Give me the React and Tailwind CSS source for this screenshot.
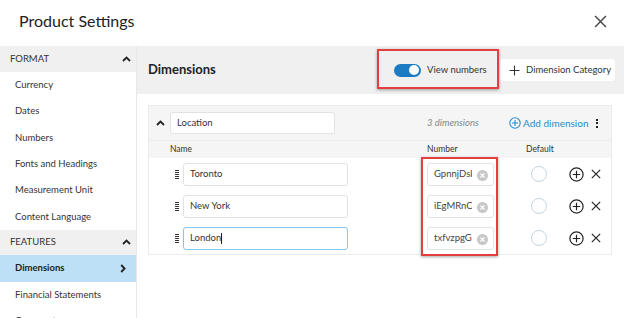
import React from "react";

const ChevUp = ({ className = "" }) => (
  <svg width="9" height="6" viewBox="0 0 9 6" className={className}>
    <path d="M1 5 L4.5 1.5 L8 5" fill="none" stroke="#222" strokeWidth="1.8" />
  </svg>
);

const ChevRight = () => (
  <svg width="6" height="9" viewBox="0 0 6 9">
    <path d="M1.2 1 L4.6 4.5 L1.2 8" fill="none" stroke="#222" strokeWidth="1.8" />
  </svg>
);

const XIcon = ({ size = 12, w = 1.4, color = "#333" }) => (
  <svg width={size} height={size} viewBox="0 0 12 12">
    <path d="M1 1 L11 11 M11 1 L1 11" stroke={color} strokeWidth={w} fill="none" />
  </svg>
);

const Handle = () => (
  <div className="flex flex-col gap-[1px] w-[4px]">
    {[0, 1, 2, 3, 4].map((i) => (
      <div key={i} className="h-[1px] w-[4px] bg-[#333]" />
    ))}
  </div>
);

const Clear = () => (
  <div className="w-[11px] h-[11px] rounded-full bg-[#c8c8c8] flex items-center justify-center mt-[3px]">
    <svg width="5" height="5" viewBox="0 0 5 5">
      <path d="M0.5 0.5 L4.5 4.5 M4.5 0.5 L0.5 4.5" stroke="#fff" strokeWidth="1.2" />
    </svg>
  </div>
);

const PlusCircle = () => (
  <svg width="15" height="15" viewBox="0 0 15 15">
    <circle cx="7.5" cy="7.5" r="6.6" fill="none" stroke="#222" strokeWidth="1.2" />
    <path d="M7.5 3.8 V11.2 M3.8 7.5 H11.2" stroke="#222" strokeWidth="1.2" />
  </svg>
);

const rows = [
  { name: "Toronto", num: "GpnnjDsk", focus: false },
  { name: "New York", num: "iEgMRnCq", focus: false },
  { name: "London", num: "txfvzpgG", focus: true },
];

const sideItems = ["Currency", "Dates", "Numbers", "Fonts and Headings", "Measurement Unit", "Content Language"];

export default function App() {
  return (
    <div
      className="relative w-[624px] h-[318px] overflow-hidden bg-white text-[#333]"
      style={{ fontFamily: "Lato, 'Open Sans', sans-serif" }}
    >
      <div className="h-[46px] flex items-center justify-between pl-[19px] pr-[17px]">
        <div className="text-[16px] text-[#222] leading-none mt-[-4px]">Product Settings</div>
        <div className="mt-[-3px]">
          <XIcon size={13} w={1.3} color="#444" />
        </div>
      </div>
      <div className="flex h-[272px]">
        <div className="w-[137px] shrink-0 border-r border-[#e8e8e8]">
          <div className="h-[26px] bg-[#f0f0f0] flex items-center justify-between pl-[10px] pr-[5px] text-[9.5px] text-[#333]">
            <span>FORMAT</span>
            <ChevUp />
          </div>
          {sideItems.map((s) => (
            <div key={s} className="h-[26.3px] flex items-center pl-[15px] text-[9.5px] text-[#333]">
              {s}
            </div>
          ))}
          <div className="h-[25px] bg-[#f0f0f0] flex items-center justify-between pl-[10px] pr-[5px] text-[9.5px] text-[#333]">
            <span>FEATURES</span>
            <ChevUp />
          </div>
          <div className="h-[27px] bg-[#bde0f6] flex items-center justify-between pl-[15px] pr-[10px] text-[9.5px] font-bold text-[#222]">
            <span>Dimensions</span>
            <ChevRight />
          </div>
          <div className="h-[26px] flex items-center pl-[15px] text-[9.5px] text-[#333]">Financial Statements</div>
          <div className="h-[26px] flex items-center pl-[15px] text-[9.5px] text-[#333]">Comments</div>
        </div>
        <div className="flex-1">
          <div className="h-[48px] bg-[#f0f0f0] flex items-center pl-[11px] pr-[9px]">
            <div className="text-[13px] font-bold text-[#222]">Dimensions</div>
            <div className="ml-auto flex items-center pl-[17px] w-[122px] h-[39px] mr-[1px]">
              <div className="w-[27px] h-[13px] rounded-full bg-[#1b7bc3] relative">
                <div className="absolute right-[2px] top-[1.5px] w-[10px] h-[10px] rounded-full bg-white" />
              </div>
              <span className="ml-[6px] text-[9.5px] text-[#333] whitespace-nowrap">View numbers</span>
            </div>
            <div className="h-[22px] w-[115px] bg-white rounded-[3px] flex items-center pl-[9px] text-[9.5px] text-[#333] whitespace-nowrap">
              <svg width="11" height="11" viewBox="0 0 11 11">
                <path d="M5.5 0.5 V10.5 M0.5 5.5 H10.5" stroke="#333" strokeWidth="1.1" />
              </svg>
              <span className="ml-[6px]">Dimension Category</span>
            </div>
          </div>
          <div className="mt-[11px] ml-[11px] w-[464px] border border-[#ececec]">
            <div className="h-[34px] bg-[#f5f5f5] flex items-center">
              <div className="w-[21px] flex justify-center pl-[1px]">
                <ChevUp />
              </div>
              <div className="w-[165px] h-[22px] bg-white border border-[#e2e2e2] rounded-[3px] flex items-center pl-[6px] text-[9.5px] text-[#333]">
                Location
              </div>
              <div className="ml-[92px] w-[82px] text-[9.5px] italic text-[#888] whitespace-nowrap">3 dimensions</div>
              <div className="w-[87px] flex items-center text-[10px] text-[#2a8ad0] whitespace-nowrap">
                <svg width="12" height="12" viewBox="0 0 12 12">
                  <circle cx="6" cy="6" r="5.2" fill="none" stroke="#2a8ad0" strokeWidth="1.1" />
                  <path d="M6 3 V9 M3 6 H9" stroke="#2a8ad0" strokeWidth="1.1" />
                </svg>
                <span className="ml-[2px]">Add dimension</span>
              </div>
              <div className="flex flex-col gap-[1.5px]">
                <div className="w-[2px] h-[2px] bg-[#222]" />
                <div className="w-[2px] h-[2px] bg-[#222]" />
                <div className="w-[2px] h-[2px] bg-[#222]" />
              </div>
            </div>
            <div className="h-[18px] bg-[#f5f5f5] flex items-center text-[8.5px] text-[#333] border-t border-[#ececec]">
              <div className="w-[278px] pl-[21px]">Name</div>
              <div className="w-[99px]">Number</div>
              <div>Default</div>
            </div>
            <div>
              {rows.map((r) => (
                <div key={r.name} className="h-[32px] flex items-center">
                  <div className="w-[34px] flex justify-end pr-[4px]">
                    <Handle />
                  </div>
                  <div
                    className={
                      "w-[165px] h-[23px] bg-white rounded-[3px] flex items-center pl-[6px] text-[9.5px] text-[#333] border " +
                      (r.focus ? "border-[#86c5ec]" : "border-[#e2e2e2]")
                    }
                  >
                    {r.name}
                    {r.focus && <span className="w-[1px] h-[11px] bg-[#222]" />}
                  </div>
                  <div className="w-[79px]" />
                  <div className="w-[67px] h-[23px] bg-white border border-[#e2e2e2] rounded-[3px] flex items-center pl-[6px] text-[9.5px] text-[#444]">
                    <span className="w-[38px] overflow-hidden whitespace-nowrap">{r.num}</span>
                    <span className="ml-[5px]">
                      <Clear />
                    </span>
                  </div>
                  <div className="ml-[37px] w-[16px] h-[16px] rounded-full border border-[#c7d3dc] bg-white" />
                  <div className="ml-[22px] flex items-center">
                    <PlusCircle />
                  </div>
                  <div className="ml-[7px] flex items-center">
                    <XIcon size={10} w={1.4} color="#222" />
                  </div>
                </div>
              ))}
            </div>
          </div>
        </div>
      </div>
      <div className="absolute left-[377px] top-[49px] w-[122px] h-[40px] border-2 border-[#e53e3e] shadow-[0_1px_3px_rgba(0,0,0,0.35)]" />
      <div className="absolute left-[421px] top-[157px] w-[77px] h-[99px] border-2 border-[#e53e3e] shadow-[0_1px_3px_rgba(0,0,0,0.35)]" />
    </div>
  );
}
